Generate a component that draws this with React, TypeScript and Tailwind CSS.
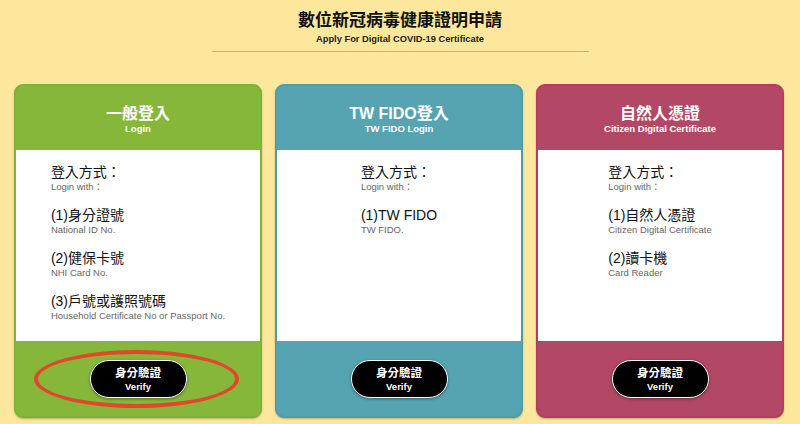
import React from "react";

const FONT = { fontFamily: '"Liberation Sans", Arial, "Noto Sans CJK TC", sans-serif' };

type Item = { zh: string; en: string };
type Card = {
  title: string;
  sub: string;
  bg: string;
  border: string;
  items: Item[];
  ring?: boolean;
};

const cards: Card[] = [
  {
    title: "一般登入",
    sub: "Login",
    bg: "bg-[#86b73b]",
    border: "border-[#7db238]",
    items: [
      { zh: "登入方式：", en: "Login with：" },
      { zh: "(1)身分證號", en: "National ID No." },
      { zh: "(2)健保卡號", en: "NHI Card No." },
      { zh: "(3)戶號或護照號碼", en: "Household Certificate No or Passport No." },
    ],
    ring: true,
  },
  {
    title: "TW FIDO登入",
    sub: "TW FIDO Login",
    bg: "bg-[#56a3b1]",
    border: "border-[#4f9dab]",
    items: [
      { zh: "登入方式：", en: "Login with：" },
      { zh: "(1)TW FIDO", en: "TW FIDO." },
    ],
  },
  {
    title: "自然人憑證",
    sub: "Citizen Digital Certificate",
    bg: "bg-[#b24866]",
    border: "border-[#b83a5e]",
    items: [
      { zh: "登入方式：", en: "Login with：" },
      { zh: "(1)自然人憑證", en: "Citizen Digital Certificate" },
      { zh: "(2)讀卡機", en: "Card Reader" },
    ],
  },
];

function CardView({ c }: { c: Card }) {
  return (
    <div
      className={`relative w-[248px] h-[334px] rounded-[9px] border-2 ${c.border} ${c.bg} flex flex-col overflow-hidden shadow-[0_1px_2px_rgba(0,0,0,0.25)]`}
    >
      <div className="h-[64px] flex flex-col items-center pt-[19px] text-white">
        <div className="text-[16px] leading-[18px] font-bold">{c.title}</div>
        <div className="text-[9.5px] leading-[12px] font-bold">{c.sub}</div>
      </div>
      <div className="h-[191px] bg-white flex justify-center pt-[13px]">
        <div className="flex flex-col gap-[13px]">
          {c.items.map((it, i) => (
            <div key={i} className="flex flex-col">
              <div className="text-[14px] leading-[18px] text-[#111]">{it.zh}</div>
              <div className="text-[9.5px] leading-[12px] text-[#666]">{it.en}</div>
            </div>
          ))}
        </div>
      </div>
      <div className="flex-1 flex justify-center pt-[19px]">
        <div className="w-[97px] h-[38px] rounded-full bg-black border-[1.5px] border-white flex flex-col items-center justify-center text-white shadow-[0_1px_3px_rgba(0,0,0,0.4)]">
          <div className="text-[11.5px] leading-[14px] font-bold">身分驗證</div>
          <div className="text-[9.5px] leading-[13px] font-bold">Verify</div>
        </div>
      </div>
      {c.ring && (
        <div className="absolute left-[18px] top-[264px] w-[205px] h-[58px] rounded-[50%] border-[4px] border-[#e2472a]" />
      )}
    </div>
  );
}

export default function App() {
  return (
    <div className="w-[800px] h-[424px] bg-[#fce79c] overflow-hidden" style={FONT}>
      <div className="flex flex-col items-center pt-[10px]">
        <div className="text-[17px] leading-[21px] font-bold text-[#111]">數位新冠病毒健康證明申請</div>
        <div className="text-[9.3px] leading-[14px] font-bold text-[#222] mt-[1px]">
          Apply For Digital COVID-19 Certificate
        </div>
        <div className="mt-[5px] w-[377px] h-px bg-[#c4b27f]" />
      </div>
      <div className="flex gap-[13px] px-[14px] mt-[32px]">
        {cards.map((c, i) => (
          <CardView key={i} c={c} />
        ))}
      </div>
    </div>
  );
}
